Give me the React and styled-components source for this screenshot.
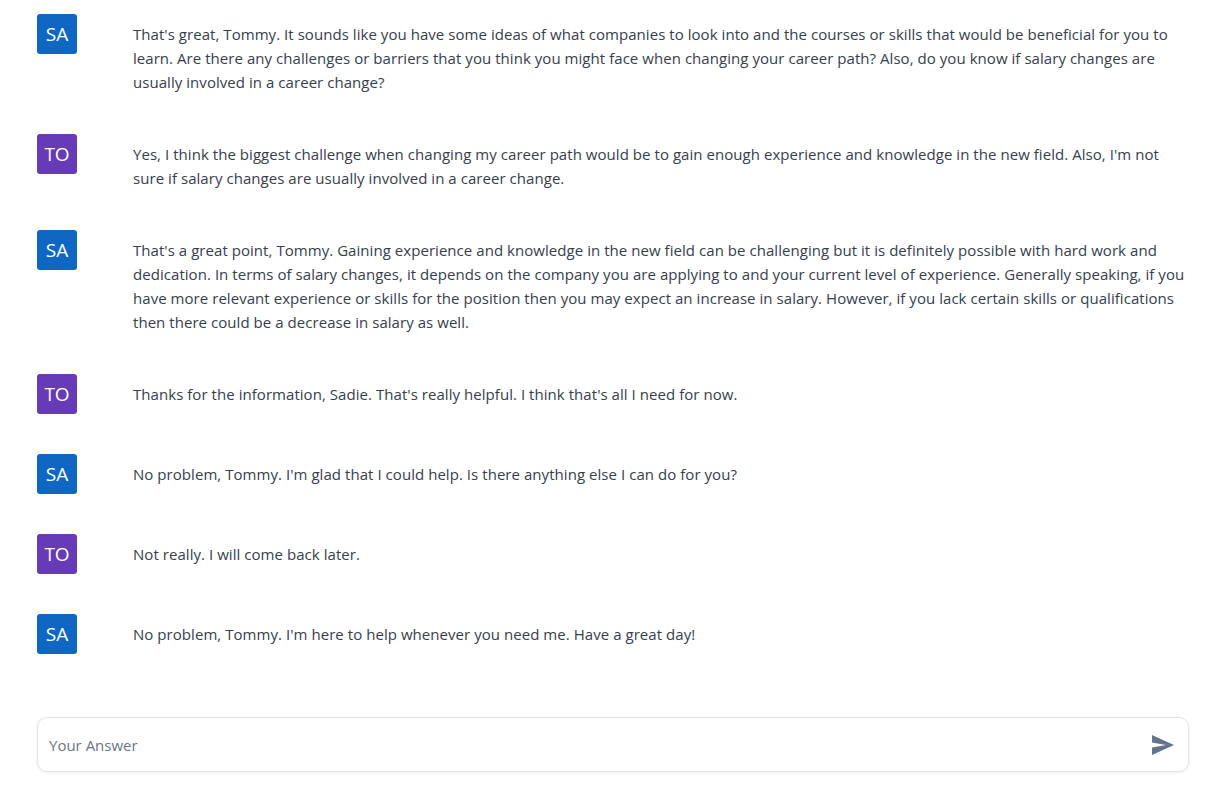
import React from 'react';
import styled, { createGlobalStyle } from 'styled-components';

const messages = [
  {
    from: 'SA',
    text: "That's great, Tommy. It sounds like you have some ideas of what companies to look into and the courses or skills that would be beneficial for you to learn. Are there any challenges or barriers that you think you might face when changing your career path? Also, do you know if salary changes are usually involved in a career change?",
  },
  {
    from: 'TO',
    text: "Yes, I think the biggest challenge when changing my career path would be to gain enough experience and knowledge in the new field. Also, I'm not sure if salary changes are usually involved in a career change.",
  },
  {
    from: 'SA',
    text: "That's a great point, Tommy. Gaining experience and knowledge in the new field can be challenging but it is definitely possible with hard work and dedication. In terms of salary changes, it depends on the company you are applying to and your current level of experience. Generally speaking, if you have more relevant experience or skills for the position then you may expect an increase in salary. However, if you lack certain skills or qualifications then there could be a decrease in salary as well.",
  },
  {
    from: 'TO',
    text: "Thanks for the information, Sadie. That's really helpful. I think that's all I need for now.",
  },
  {
    from: 'SA',
    text: "No problem, Tommy. I'm glad that I could help. Is there anything else I can do for you?",
  },
  { from: 'TO', text: 'Not really. I will come back later.' },
  {
    from: 'SA',
    text: "No problem, Tommy. I'm here to help whenever you need me. Have a great day!",
  },
];

const GlobalStyle = createGlobalStyle`
  body {
    margin: 0;
    background: #ffffff;
    font-family: 'Open Sans', 'Noto Sans', sans-serif;
  }
`;

const Page = styled.div`
  width: 1225px;
  height: 793px;
  box-sizing: border-box;
  padding: 14px 36px 0 37px;
  display: flex;
  flex-direction: column;
  overflow: hidden;
`;

const Thread = styled.div`
  display: flex;
  flex-direction: column;
  gap: 40px;
`;

const Row = styled.div`
  display: flex;
  align-items: flex-start;
  gap: 56px;
`;

const Avatar = styled.div`
  flex: none;
  width: 40px;
  height: 40px;
  border-radius: 3px;
  background: ${p => (p.$user ? '#673ab7' : '#0f67c1')};
  color: #ffffff;
  font-size: 19px;
  display: flex;
  align-items: center;
  justify-content: center;
`;

const Text = styled.p`
  margin: 0;
  padding-top: 8px;
  font-size: 15px;
  line-height: 24px;
  color: #36404d;
  letter-spacing: 0.05px;
`;

const InputBox = styled.div`
  margin-top: 63px;
  height: 55px;
  box-sizing: border-box;
  border: 1px solid #e4e4e7;
  border-radius: 10px;
  box-shadow: 0 1px 3px rgba(0, 0, 0, 0.08);
  display: flex;
  align-items: center;
  padding: 0 14px 0 11px;
`;

const Input = styled.input`
  flex: 1;
  border: none;
  outline: none;
  background: transparent;
  font-family: inherit;
  font-size: 15px;
  padding: 0;
  color: #36404d;

  &::placeholder {
    color: #6b7589;
  }
`;

const SendButton = styled.button`
  border: none;
  background: none;
  padding: 0;
  display: flex;
  cursor: pointer;
`;

const App = () => {
  return (
    <>
      <GlobalStyle />
      <Page>
        <Thread>
          {messages.map((m, i) => (
            <Row key={i}>
              <Avatar $user={m.from === 'TO'}>{m.from}</Avatar>
              <Text>{m.text}</Text>
            </Row>
          ))}
        </Thread>
        <InputBox>
          <Input placeholder='Your Answer' />
          <SendButton aria-label='Send'>
            <svg width='22' height='20' viewBox='0 0 22 20'>
              <path d='M0 0 L22 10 L0 20 L0 12.5 L14 10 L0 7.5 Z' fill='#64748b' />
            </svg>
          </SendButton>
        </InputBox>
      </Page>
    </>
  );
};

export default App;
